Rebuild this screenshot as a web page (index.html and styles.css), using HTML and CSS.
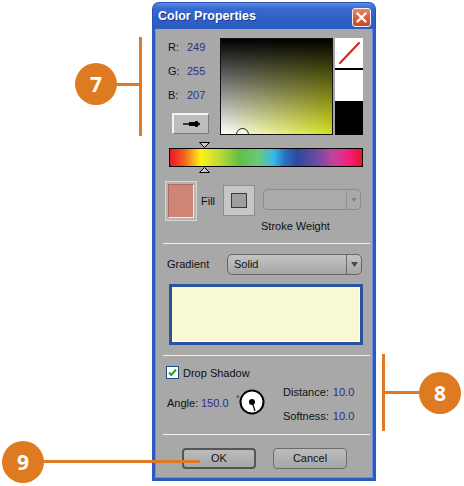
FILE: index.html
```html
<!DOCTYPE html>
<html>
<head>
<meta charset="utf-8">
<link rel="stylesheet" href="styles.css">
</head>
<body>
<div class="stage">
  <div class="dialog">
    <div class="titlebar">
      <span class="title">Color Properties</span>
      <span class="close"><svg width="11" height="11" viewBox="0 0 11 11"><path d="M1.5 1.5 L9.5 9.5 M9.5 1.5 L1.5 9.5" stroke="#fff" stroke-width="2.4" stroke-linecap="round"/></svg></span>
    </div>
    <div class="body">
      <div class="top">
        <div class="rgb">
          <div class="rgbrow"><span class="lbl">R:</span><span class="val">249</span></div>
          <div class="rgbrow"><span class="lbl">G:</span><span class="val">255</span></div>
          <div class="rgbrow"><span class="lbl">B:</span><span class="val">207</span></div>
          <div class="dropper"><svg width="17" height="6" viewBox="0 0 17 6"><rect x="0" y="2.3" width="7" height="1.4" fill="#000"/><rect x="6" y="1" width="7" height="4" fill="#000"/><rect x="12" y="0" width="3" height="6" rx="1" fill="#000"/><rect x="14" y="1.5" width="3" height="3" rx="1.5" fill="#000"/></svg></div>
        </div>
        <div class="picker"><div class="marker"></div></div>
        <div class="swatches">
          <div class="sw sw-none"><svg width="28" height="30" viewBox="0 0 28 30"><line x1="5" y1="25" x2="24" y2="5" stroke="#d42a2a" stroke-width="2.2" stroke-linecap="round"/></svg></div>
          <div class="sw sw-white"></div>
        </div>
      </div>

      <div class="spectrum">
        <svg class="tri" width="11" height="6" viewBox="0 0 11 6"><path d="M0.5 0.5 H10.5 L5.5 5.5 Z" fill="#c8c8c8" stroke="#000" stroke-width="1"/></svg>
        <div class="bar"></div>
        <svg class="tri" width="11" height="6" viewBox="0 0 11 6"><path d="M0.5 5.5 H10.5 L5.5 0.5 Z" fill="#c8c8c8" stroke="#000" stroke-width="1"/></svg>
      </div>

      <div class="fillrow">
        <div class="fill"><div class="fill-inner"></div></div>
        <span class="fill-lbl">Fill</span>
        <div class="strokebtn"><div class="stroke-inner"></div></div>
        <div class="strokecol">
          <div class="dd dd-disabled"><span class="dd-text"></span><span class="dd-arrow"><svg width="6" height="4" viewBox="0 0 6 4"><path d="M0 0 H6 L3 4 Z" fill="#858585"/></svg></span></div>
          <div class="sw-lbl">Stroke Weight <span class="faint">. .</span></div>
        </div>
      </div>

      <div class="sep"></div>

      <div class="gradrow">
        <span class="grad-lbl">Gradient</span>
        <div class="dd dd-grad"><span class="dd-text">Solid</span><span class="dd-arrow"><svg width="7" height="5" viewBox="0 0 7 5"><path d="M0 0 H7 L3.5 5 Z" fill="#4a4a4a"/></svg></span></div>
      </div>

      <div class="preview"></div>

      <div class="sep"></div>

      <div class="checkrow">
        <span class="checkbox"><svg width="11" height="11" viewBox="0 0 11 11"><path d="M2 5.5 L4.3 8 L9 2.5" fill="none" stroke="#22a22a" stroke-width="2"/></svg></span>
        <span class="check-lbl">Drop Shadow</span>
      </div>

      <div class="shadow">
        <div class="shadow-left">
          <span class="ang-lbl">Angle:</span>
          <span class="val ang-val">150.0</span>
          <span class="deg">°</span>
          <svg class="dial" width="26" height="26" viewBox="0 0 26 26"><circle cx="13" cy="13" r="11.5" fill="#fff" stroke="#000" stroke-width="2"/><line x1="13" y1="13" x2="16" y2="22" stroke="#000" stroke-width="1.2"/><circle cx="13" cy="13" r="3" fill="#000"/></svg>
        </div>
        <div class="shadow-right">
          <div class="srow"><span class="s-lbl">Distance:</span><span class="val">10.0</span></div>
          <div class="srow"><span class="s-lbl">Softness:</span><span class="val">10.0</span></div>
        </div>
      </div>

      <div class="sep sep-last"></div>

      <div class="btnrow">
        <div class="btn btn-ok">OK</div>
        <div class="btn btn-cancel">Cancel</div>
      </div>
    </div>
  </div>

  <div class="callout c7">7</div>
  <div class="cline c7-h"></div>
  <div class="cline c7-v"></div>

  <div class="callout c8">8</div>
  <div class="cline c8-h"></div>
  <div class="cline c8-v"></div>

  <div class="callout c9">9</div>
  <div class="cline c9-h"></div>
</div>
</body>
</html>
```

FILE: styles.css
```css
* { box-sizing: border-box; }
html, body { margin: 0; padding: 0; background: #fff; }
body { font-family: "Liberation Sans", Arial, sans-serif; font-size: 11px; color: #111; }

.stage { position: relative; width: 464px; height: 486px; overflow: hidden; padding-top: 2px; }

.dialog { margin-left: 152px; width: 224px; height: 479px; display: flex; flex-direction: column; }

.titlebar {
  height: 27px; flex: none;
  display: flex; align-items: flex-start; justify-content: space-between;
  border-radius: 7px 7px 0 0;
  background: linear-gradient(#5b8ee2 0%, #3a6ad0 20%, #2f60c6 60%, #2c5cc2 100%);
  border: 1px solid #2552b4; border-bottom: none;
}
.title {
  margin-left: 5px; margin-top: 6px;
  font-family: "Liberation Sans", Arial, sans-serif; font-weight: bold; font-size: 12.5px;
  color: #fff; line-height: 15px; text-shadow: 1px 1px 0 #1a3c8a;
}
.close {
  margin-top: 5px; margin-right: 4px;
  width: 19px; height: 19px; border: 1px solid #f2f2f2; border-radius: 3px;
  background: linear-gradient(#e8866a, #d55a38 60%, #c94a2a);
  display: flex; align-items: center; justify-content: center;
}

.body {
  flex: 1;
  background: #a8a8a8;
  border: 3px solid #2a5ac4; border-top: none;
  box-shadow: inset 1px 0 0 #6b8fd8, inset -1px 0 0 #6b8fd8, inset 0 -1px 0 #6b8fd8;
  display: flex; flex-direction: column;
}
.body > * { flex-shrink: 0; }

.val { color: #2e2e88; }

/* top */
.top { display: flex; margin-top: 6px; }
.rgb { margin-left: 13px; width: 52px; }
.rgbrow { height: 24px; line-height: 24px; display: flex; }
.lbl { width: 19px; }
.dropper {
  margin-top: 6px; margin-left: 4px; width: 37px; height: 21px;
  background: #bdbdbd;
  border-top: 2px solid #f2f2f2; border-left: 2px solid #f2f2f2;
  border-right: 1px solid #7a7a7a; border-bottom: 1px solid #7a7a7a;
  display: flex; align-items: center; justify-content: center;
}
.picker {
  position: relative; overflow: hidden;
  margin-top: 3px; width: 113px; height: 97px;
  background:
    linear-gradient(to top, rgba(0,0,0,0) 0%, rgba(0,0,0,1) 100%),
    linear-gradient(to right, #ffffff 0%, #d5df1f 100%);
  border: 1px solid #111;
}
.marker {
  position: absolute; left: 15px; top: 89px;
  width: 13px; height: 13px; border-radius: 50%;
  border: 1px solid #222; background: rgba(255,255,255,0.4);
}
.swatches {
  margin-top: 3px; margin-left: 2px; width: 28px; height: 97px;
  background: #000; display: flex; flex-direction: column;
}
.sw { background: #fff; }
.sw-none { height: 30px; }
.sw-none svg { display: block; }
.sw-white { height: 31px; margin-top: 2px; }

/* spectrum */
.spectrum { margin-left: 14px; margin-top: 7px; width: 194px; display: flex; flex-direction: column; }
.tri { display: block; margin-left: 30px; }
.bar {
  height: 19px; border: 1px solid #000;
  background: linear-gradient(to right,
    #e8142a 0%, #f46a1c 8%, #fff21a 16%, #b6d63a 27%, #62be46 36%, #6cc87a 46%,
    #38b8e8 54%, #2a6fc0 60%, #2a4aa0 66%, #6a4aa0 76%, #c0449c 85%, #f0207c 93%, #e8142a 100%);
}

/* fill row */
.fillrow { display: flex; align-items: flex-start; margin-top: 8px; }
.fill {
  margin-left: 10px; width: 32px; height: 40px;
  border: 1px solid #d6d6d6; background: #b4b4b4; padding: 2px;
}
.fill-inner { width: 100%; height: 100%; background: #cf8576; border: 1px solid #eee; border-top-color: #b06a5c; border-left-color: #b06a5c; }
.fill-lbl { width: 26px; padding-left: 4px; margin-top: 13px; line-height: 14px; }
.strokebtn {
  margin-top: 4px; width: 32px; height: 31px;
  background: #c6c6c6; border: 1px solid #8c8c8c;
  display: flex; align-items: center; justify-content: center;
}
.stroke-inner { width: 16px; height: 15px; background: #9e9e9e; border: 1px solid #3a3a3a; }
.strokecol { margin-left: 8px; margin-top: 8px; }
.dd { display: flex; height: 21px; }
.dd-text { flex: 1; line-height: 19px; }
.dd-arrow { width: 14px; display: flex; align-items: center; justify-content: center; }
.dd-disabled { width: 98px; border: 1px solid #8c8c8c; border-radius: 4px; background: #aaaaaa; }
.dd-disabled .dd-arrow { border-left: 1px solid #939393; }
.sw-lbl { margin-left: -2px; margin-top: 9px; line-height: 14px; white-space: nowrap; }
.faint { color: #8e8e8e; margin-left: 4px; }

.sep { margin-left: 8px; width: 207px; height: 1px; background: #f2f2f2; margin-top: 10px; }

/* gradient */
.gradrow { display: flex; margin-top: 10px; height: 21px; }
.grad-lbl { margin-left: 12px; width: 60px; line-height: 21px; }
.dd-grad {
  width: 135px; border: 1px solid #666; border-radius: 5px;
  background: linear-gradient(#c4c4c4, #a6a6a6);
}
.dd-grad .dd-text { padding-left: 6px; }
.dd-grad .dd-arrow { width: 15px; border-left: 1px solid #6a6a6a; }
.preview {
  margin-left: 14px; margin-top: 9px; width: 194px; height: 61px;
  border: 3px solid #2b52a0; background: #f8f8d2;
  box-shadow: inset -1px -1px 0 #fff;
}

/* drop shadow */
.checkrow { display: flex; align-items: center; margin-top: 10px; height: 13px; }
.checkbox {
  margin-left: 11px; width: 13px; height: 13px; background: #fff; border: 1px solid #1c4f80;
  display: flex; align-items: center; justify-content: center;
}
.check-lbl { margin-left: 4px; }
.shadow { display: flex; margin-top: 5px; height: 38px; }
.shadow-left { margin-left: 12px; width: 116px; margin-top: 6px; height: 26px; display: flex; align-items: center; }
.ang-lbl { width: 34px; }
.ang-val { width: 35px; }
.deg { width: 5px; font-size: 9px; align-self: flex-start; margin-top: 4px; }
.dial { display: block; margin-top: -3px; margin-left: -2px; }
.shadow-right { display: flex; flex-direction: column; gap: 10px; margin-top: 1px; }
.srow { line-height: 14px; white-space: nowrap; }
.s-lbl { margin-right: 4px; }

.sep-last { margin-top: 12px; }

/* buttons */
.btnrow { display: flex; margin-top: 13px; }
.btn {
  width: 74px; height: 21px; line-height: 19px; text-align: center;
  border: 1px solid #6c6c6c; border-radius: 4px;
  background: linear-gradient(#bcbcbc, #a6a6a6);
}
.btn-ok { margin-left: 27px; border: 2px solid #555; line-height: 17px; }
.btn-cancel { margin-left: 17px; }

/* callouts */
.callout {
  position: absolute; width: 42px; height: 42px; border-radius: 50%;
  background: #de7a22; color: #fff;
  font-family: "Open Sans", "Liberation Sans", sans-serif; font-weight: bold; font-size: 21px;
  display: flex; align-items: center; justify-content: center; line-height: 1;
}
.cline { position: absolute; background: #de7a22; }
.c7 { left: 75px; top: 63px; }
.c7-h { left: 116px; top: 83px; width: 25px; height: 3px; }
.c7-v { left: 139px; top: 37px; width: 3px; height: 99px; }
.c8 { left: 419px; top: 372px; }
.c8-h { left: 383px; top: 391px; width: 38px; height: 3px; }
.c8-v { left: 382px; top: 354px; width: 3px; height: 77px; }
.c9 { left: 2px; top: 441px; }
.c9-h { left: 43px; top: 460px; width: 157px; height: 3px; }
```
